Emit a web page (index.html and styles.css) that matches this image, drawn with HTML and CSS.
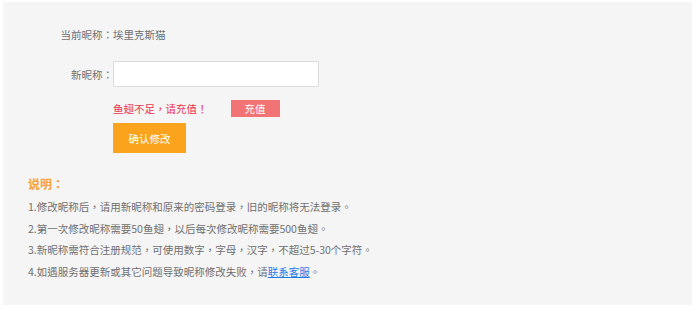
FILE: index.html
```html
<!DOCTYPE html>
<html lang="zh-TW">
<head>
<meta charset="UTF-8">
<meta name="viewport" content="width=device-width, initial-scale=1.0">
<title>修改昵称</title>
<link rel="stylesheet" href="styles.css">
</head>
<body>

<div class="panel">
<div class="row row-current">
<span class="label">当前昵称：</span>
<span class="value">埃里克斯猫</span>
</div>
<div class="row row-new">
<span class="label">新昵称：</span>
<input type="text" class="nick-input">
</div>
<div class="row row-tip">
<span class="label"></span>
<span class="tip">鱼翅不足，请充值！</span>
<button class="btn-pay">充值</button>
</div>
<div class="row row-submit">
<span class="label"></span>
<button class="btn-submit">确认修改</button>
</div>

<div class="notes">
<div class="notes-title">说明：</div>
<p>1.修改昵称后，请用新昵称和原来的密码登录，旧的昵称将无法登录。</p>
<p>2.第一次修改昵称需要50鱼翅，以后每次修改昵称需要500鱼翅。</p>
<p>3.新昵称需符合注册规范，可使用数字，字母，汉字，不超过5-30个字符。</p>
<p>4.如遇服务器更新或其它问题导致昵称修改失败，请<a href="#">联系客服</a>。</p>
</div>
</div>

</body>
</html>
```

FILE: styles.css
```css
body {
margin: 0;
background: #fff;
font-family: "Noto Sans CJK TC", "Noto Sans CJK SC", "Noto Sans", sans-serif;
font-size: 10.5px;
color: #707070;
}
.panel {
margin: 2px 0 0 3px;
width: 689px;
height: 281px;
padding-top: 22px;
background: #f5f5f5;
}
.row {
display: flex;
align-items: center;
}
.label {
width: 110px;
flex-shrink: 0;
text-align: right;
}
.row-current {
line-height: 22px;
}
.row-new {
margin-top: 15px;
}
.nick-input {
margin: 0;
padding: 0 4px;
box-sizing: border-box;
width: 206px;
height: 26px;
border: 1px solid #dcdcdc;
background: #fff;
}
.row-tip {
margin-top: 13px;
height: 17px;
}
.tip {
color: #e9344f;
}
.btn-pay {
margin-left: 23px;
width: 49px;
height: 17px;
padding: 0;
border: 0;
background: #f27376;
color: #fff;
font-family: inherit;
font-size: 10.5px;
line-height: 17px;
cursor: pointer;
}
.row-submit {
margin-top: 6px;
}
.btn-submit {
width: 73px;
height: 30px;
padding: 0;
border: 0;
background: #fca31d;
color: #fff;
font-family: inherit;
font-size: 10.5px;
cursor: pointer;
}
.notes {
margin-top: 20px;
padding-left: 25px;
}
.notes-title {
margin-bottom: 1px;
color: #f8a03c;
font-size: 12px;
font-weight: bold;
line-height: 22px;
}
.notes p {
margin: 0;
line-height: 21.7px;
}
.notes a {
color: #1f7ae6;
text-decoration: underline;
}
```
